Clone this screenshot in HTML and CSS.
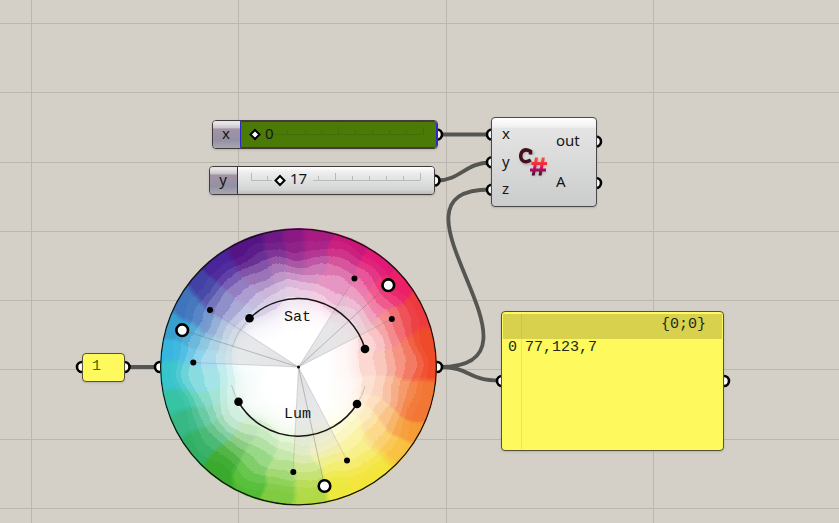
FILE: index.html
```html
<!DOCTYPE html>
<html lang="en">
<head>
<meta charset="utf-8">
<title>Node canvas</title>
<link rel="stylesheet" href="styles.css">
</head>
<body>
<main class="canvas">
  <svg class="layer" width="839" height="523" viewBox="0 0 839 523">
    <path class="grid" d="M31.5 0V523M238.5 0V523M446.5 0V523M653.5 0V523M0 23.5H839M0 92.5H839M0 162.5H839M0 231.5H839M0 300.5H839M0 369.5H839M0 439.5H839M0 508.5H839"/>
    <g class="wires">
      <path d="M440 134.500H490"/>
      <path d="M437 180.500C460 180.500 466 162.500 490 162.500"/>
      <path d="M439 367C566 367 368 189.500 490 189.500"/>
      <path d="M439 367C472 367 466 380.500 500 380.500"/>
      <path d="M126 367H160"/>
    </g>
    <g class="ports">
      <circle cx="437" cy="134.500" r="5"/><circle cx="434.500" cy="180.500" r="5"/>
      <circle cx="492" cy="134.500" r="5"/><circle cx="492" cy="162.300" r="5"/><circle cx="492" cy="189.800" r="5"/>
      <circle cx="596" cy="141.500" r="5"/><circle cx="596" cy="183" r="5"/>
      <circle cx="82" cy="367" r="5"/><circle cx="124.500" cy="367" r="5"/>
      <circle cx="160" cy="367" r="5"/><circle cx="437" cy="367" r="5"/>
      <circle cx="502" cy="381" r="5"/><circle cx="724" cy="381" r="5"/>
    </g>
  </svg>

  <section class="slider slider-x">
    <span class="name">x</span>
    <div class="track">
      <svg width="196" height="26" viewBox="0 0 196 26"><path class="ticks" d="M30 13.500H182.500M46.500 13V9M64.500 13V9M80.500 13V9M97.500 13V6M114.500 13V9M131.500 13V9M148.500 13V9M165.500 13V9M182.500 13V6"/><path class="grip" d="M14 9L18.500 13.500L14 18L9.500 13.500Z"/></svg>
      <output>0</output>
    </div>
  </section>
  <section class="slider slider-y">
    <span class="name">y</span>
    <div class="track">
      <svg width="196" height="26" viewBox="0 0 196 26"><path class="ticks" d="M13.500 6V13.500H34M29.500 13V9M75 13.500H182.500M80.500 13V9M97.500 13V6M114.500 13V9M131.500 13V9M148.500 13V9M165.500 13V9M182.500 13V6"/><path class="grip" d="M42 9L46.500 13.500L42 18L37.500 13.500Z"/></svg>
      <output>17</output>
    </div>
  </section>

  <section class="script">
    <div class="inputs"><span>x</span><span>y</span><span>z</span></div>
    <svg class="logo" width="34" height="36" viewBox="0 0 34 36">
      <defs><linearGradient id="hash" x1="0" y1="0" x2="0" y2="1"><stop offset="0" stop-color="#ff5032"/><stop offset=".4" stop-color="#f02a3a"/><stop offset=".6" stop-color="#c40e68"/><stop offset="1" stop-color="#3e1024"/></linearGradient></defs>
      <g class="logo-shadow"><path d="M15.500 10V7.500Q9 3.500 5.500 9Q3 14 6.500 18Q10 20 15.500 17"/><path d="M20.500 14L17.500 31M26.500 14L23.500 31M15.500 19.500H30M14 26H29"/></g>
      <path class="c" d="M13.500 9.500V6.300Q7.500 3 4.500 7.500Q2.500 12.500 5.500 15.500Q8.500 18 13.800 15"/>
      <path class="hash" transform="translate(1 1)" d="M17 11.500H20L19.200 16H23L23.800 11.500H26.800L26 16H29V19H25.500L24.800 22.500H28V25.500H24.300L23.500 29.500H20.500L21.300 25.500H17.500L16.700 29.500H13.700L14.500 25.500H12V22.500H15L15.700 19H13.500V16H16.200ZM18.700 19L18 22.500H21.800L22.500 19Z"/>
    </svg>
    <div class="outputs"><span>out</span><span>A</span></div>
  </section>

  <section class="wheel">
    <div class="hues"></div>
    <svg class="dial" width="280" height="280" viewBox="158 227 280 280">
      <defs><radialGradient id="sector" gradientUnits="userSpaceOnUse" cx="298.500" cy="367" r="105"><stop offset="0" stop-color="#bfc0c4" stop-opacity=".5"/><stop offset=".65" stop-color="#c8cacc" stop-opacity=".36"/><stop offset="1" stop-color="#d0d0d4" stop-opacity="0"/></radialGradient></defs>
      <g class="sectors">
        <path d="M298.500 367L354.500 278.500L391.500 319Z"/>
        <path d="M298.500 367L210 310L193.500 362.500Z"/>
        <path d="M298.500 367L293 472L347 460.500Z"/>
      </g>
      <path class="rays" d="M298.500 367L354.500 278.500M298.500 367L391.500 319M298.500 367L210 310M298.500 367L193.500 362.500M298.500 367L293 472M298.500 367L347 460.500"/>
      <path class="rays main-rays" d="M298.500 367L388 285M298.500 367L182 330M298.500 367L324.500 486"/>
      <path class="guide" d="M249.500 318.500A69 69 0 0 0 232.500 347M238.500 402Q234 394 231.500 385M357 404Q363 395 365 386"/>
      <path class="arc" d="M249.500 318.500A69.500 69.500 0 0 1 365 349M238.500 402A69.500 69.500 0 0 0 357 404"/>
      <g class="knobs"><circle cx="249.500" cy="318.300" r="4.300"/><circle cx="365" cy="349" r="4.300"/><circle cx="238.500" cy="401.800" r="4.300"/><circle cx="357" cy="404" r="4.300"/>
      <circle cx="354.500" cy="278.500" r="3"/><circle cx="391.800" cy="319" r="3"/><circle cx="210" cy="310" r="3"/><circle cx="193.300" cy="362.500" r="3"/><circle cx="293.300" cy="472" r="3"/><circle cx="347" cy="460.500" r="3"/><circle cx="298.500" cy="367" r="1.500"/></g>
      <g class="handles"><circle cx="388.300" cy="285.200" r="5.800"/><circle cx="182.200" cy="330.200" r="5.800"/><circle cx="324.500" cy="486" r="5.800"/></g>
      <circle class="rim" cx="298.500" cy="367" r="137.900"/>
      <text x="284" y="321">Sat</text><text x="284" y="418">Lum</text>
    </svg>
  </section>

  <section class="panel panel-small">1</section>
  <section class="panel panel-data">
    <header>{0;0}</header>
    <div class="row"><span class="index">0</span><span>77,123,7</span></div>
  </section>
  <svg class="filters" width="0" height="0"><filter id="patches" x="0" y="0" width="1" height="1" color-interpolation-filters="sRGB"><feTurbulence type="fractalNoise" baseFrequency=".022" numOctaves="2" seed="4"/><feDisplacementMap in="SourceGraphic" scale="26" xChannelSelector="R" yChannelSelector="G"/></filter></svg>
</main>
</body>
</html>
```
FILE: styles.css
```css
* { box-sizing: border-box; }
body { margin: 0; }
.canvas {
  position: relative;
  width: 839px;
  height: 523px;
  overflow: hidden;
  background: #d4d0c8;
  color: #161616;
  font: 15px/20px "Noto Sans", sans-serif;
}
.layer, .filters { position: absolute; left: 0; top: 0; }
.grid { stroke: #bbb7b0; fill: none; }
.wires { stroke: #555551; stroke-width: 3.8; fill: none; }
.ports { stroke: #000; stroke-width: 2.6; fill: #fff; }

.slider {
  position: absolute;
  display: flex;
  width: 226px;
  height: 29px;
  border: 1px solid #423c3c;
  border-radius: 4px;
  overflow: hidden;
  box-shadow: 0 1px 2px #8886;
}
.slider-x { left: 212px; top: 120px; }
.slider-y { left: 209px; top: 166px; }
.name {
  width: 28px;
  flex: none;
  text-align: center;
  line-height: 25px;
  padding-right: 1px;
  border-right: 1px solid #333;
  background: linear-gradient(#e6e4e6 0 8%, #ccc8cc 24%, #a294a4 30%, #9490a4 70%, #a8a6b2);
}
.slider-x .name { width: 27px; border-right: 0; }
.track {
  position: relative;
  flex: 1;
  min-width: 0;
  overflow: hidden;
  background: linear-gradient(#fff, #ededed 20%, #d2d3d3 85%, #bcbcbc);
}
.slider-x .track { background: #4b7a07; border: 1px solid #2b2bc4; border-radius: 0 3px 3px 0; }
.track svg { display: block; }
.track output { position: absolute; left: 24px; top: 2px; }
.slider-x .track output { top: 1px; }
.slider-y .track output { left: 52px; top: 1px; }
.slider-x svg { margin-top: -1px; }
.ticks { stroke: #b9baba; fill: none; }
.slider-x .ticks { stroke: #446f08; }
.grip { fill: #fff; stroke: #000; stroke-width: 2; }

.script {
  position: absolute;
  left: 491px;
  top: 117px;
  width: 106px;
  height: 90px;
  display: flex;
  border: 1px solid #484848;
  border-radius: 4px;
  background: linear-gradient(#fff 0, #f1f1f1 10%, #e4e4e4 12%, #cbcccc);
  box-shadow: 0 1px 2px #8886;
}
.inputs, .outputs { display: flex; flex-direction: column; }
.inputs { width: 25px; padding: 5px 0 0 10px; gap: 7.500px; }
.outputs { padding: 12px 0 0 5px; gap: 21px; }
.logo { margin-top: 27px; }
.c { fill: none; stroke: #43101c; stroke-width: 3.5; }
.hash { fill: url(#hash); fill-rule: evenodd; }
.logo-shadow { fill: none; stroke: #77777766; stroke-width: 3; filter: blur(1px); }

.wheel {
  position: absolute;
  left: 160px;
  top: 228px;
  width: 277px;
  height: 278px;
  border-radius: 50%;
  overflow: hidden;
}
.hues {
  position: absolute;
  inset: -20px;
  background:
    radial-gradient(circle, #fff 0 36px, #fffffff4 56px, #ffffffe0 67px, #ffffffc8 67px 76px, #ffffffb0 76px 85px, #ffffff8c 85px 94px, #ffffff68 94px 103px, #ffffff44 103px 112px, #ffffff20 112px 120px, #ffffff0a 120px 128px, #fff0 128px),
    conic-gradient(#8b1984 0 4deg, #a81b83 7deg 14deg, #c91779 15deg 30deg, #df1975 31deg 43deg, #eb2066 44deg 56deg, #ed393f 58deg 75deg, #ef4b2b 77deg 96deg, #f27735 98deg 112deg, #f69c36 114deg 124deg, #f9c03c 126deg 134deg, #f3e53a 137deg 154deg, #ece83c 156deg 166deg, #b0d944 169deg 182deg, #80cb42 184deg 195deg, #52bd34 197deg 209deg, #39aa2c 211deg 222deg, #31b064 225deg 238deg, #37b885 240deg 247deg, #36c4a5 249deg 257deg, #37c4cb 260deg 270deg, #38b6df 272deg 280deg, #389fce 282deg 291deg, #4074bd 294deg 304deg, #4242a4 307deg 316deg, #49249a 318deg 327deg, #551486 330deg 342deg, #6f1986 345deg 354deg, #8b1984 357deg);
  filter: url(#patches);
}
.dial { position: absolute; left: -2px; top: -1px; }
.sectors { fill: url(#sector); }
.rays { fill: none; stroke: #77707d; stroke-opacity: .24; }
.main-rays { stroke-opacity: .42; }
.guide { fill: none; stroke: #9b9b94; stroke-opacity: .5; }
.arc { fill: none; stroke: #171717; stroke-width: 1.5; }
.handles { fill: #fff; stroke: #000; stroke-width: 2.6; }
.rim { fill: none; stroke: #15150f; stroke-width: 1.3; }
.dial text { font: 15px "Liberation Mono", monospace; fill: #111; }

.panel {
  position: absolute;
  background: #fef95c;
  border: 1px solid #555237;
  border-radius: 4px;
  font: 15px/18px "Liberation Mono", monospace;
  color: #222818;
  box-shadow: 0 1px 2px #8886;
}
.panel-small { left: 82px; top: 353px; width: 43px; height: 29px; padding: 4px 0 0 9px; color: #347000; }
.panel-data { left: 501px; top: 311px; width: 223px; height: 140px; padding: 1px; }
.panel-data header {
  height: 26px;
  padding: 2px 16px 0;
  text-align: right;
  background: linear-gradient(90deg, transparent 18px, #bccb4b 18px 19px, transparent 19px), #d7d14d;
  border-top: 1px solid #f5f2b0;
}
.row {
  display: flex;
  height: 110px;
  background: linear-gradient(90deg, transparent 18px, #eae751 18px 19px, transparent 19px);
}
.index { width: 17px; padding-left: 5px; margin-right: 5px; }
```
